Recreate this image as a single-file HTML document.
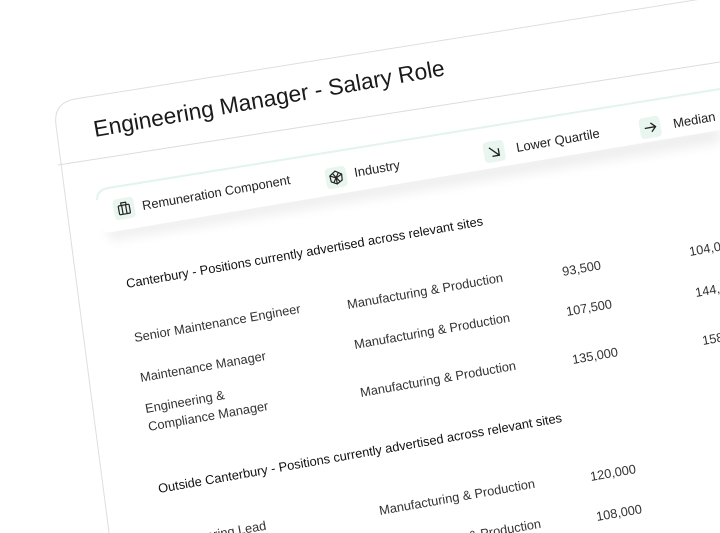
<!DOCTYPE html>
<html><head><meta charset="utf-8"><style>
html,body{margin:0;padding:0;background:#fff;width:720px;height:533px;overflow:hidden}
svg{display:block}
text{font-family:"Liberation Sans",sans-serif}
</style></head><body>
<svg width="720" height="533" viewBox="0 0 720 533" xmlns="http://www.w3.org/2000/svg">
<defs>
<filter id="sh" x="-20%" y="-50%" width="140%" height="250%"><feGaussianBlur stdDeviation="6"/></filter>
</defs>
<path d="M110 540 L56 125 Q53 103 75 99 L720 -4" fill="#fff" stroke="#dedede" stroke-width="1"/>
<line x1="58" y1="165" x2="720" y2="62" stroke="#dcdcdc" stroke-width="1"/>
<path d="M106 228 L720 126 L720 142 L110 240 Z" fill="#000" opacity="0.07" filter="url(#sh)"/>
<path d="M108 188 L720 89 L720 130 L112 232 Q101 233 100 224 L97 200 Q97 190 108 188 Z" fill="#fff"/>
<path d="M97 200 Q97 190 108 188 L720 89" fill="none" stroke="#e3f4ec" stroke-width="2"/>
<text transform="translate(95,137) rotate(-10)" font-size="22.8" fill="#1a1a1a">Engineering Manager - Salary Role</text>
<g transform="translate(112,200) rotate(-10)">
 <rect x="0" y="0" width="21" height="21" rx="4" fill="#e8f6ef"/>
 <g fill="none" stroke="#222" stroke-width="1.2"><rect x="5" y="7" width="11" height="9" rx="1"/><path d="M8 7V4.5h5V7M8.5 7v9M12.5 7v9"/></g>
</g>
<text transform="translate(143,210) rotate(-10)" font-size="12.8" fill="#222">Remuneration Component</text>
<g transform="translate(324,169) rotate(-10)">
 <rect x="0" y="0" width="21" height="21" rx="4" fill="#e8f6ef"/>
 <g fill="none" stroke="#222" stroke-width="1.2"><path d="M10.5 4 L16.5 8 L16 14 L10.5 17 L5 14 L4.5 8 Z M4.5 8 L10.5 11 L16.5 8 M10.5 11 V17 M7.5 6 L13.5 15 M13.5 6 L7.5 15"/></g>
</g>
<text transform="translate(355,177) rotate(-10)" font-size="13" fill="#222">Industry</text>
<g transform="translate(482,143) rotate(-10)">
 <rect x="0" y="0" width="21" height="21" rx="4" fill="#e8f6ef"/>
 <g fill="none" stroke="#222" stroke-width="1.3"><path d="M6 6 L15 15 M8 15 H15 V8"/></g>
</g>
<text transform="translate(517,152) rotate(-10)" font-size="13" fill="#222">Lower Quartile</text>
<g transform="translate(638,119) rotate(-10)">
 <rect x="0" y="0" width="21" height="21" rx="4" fill="#e8f6ef"/>
 <g fill="none" stroke="#222" stroke-width="1.3"><path d="M5 10.5 H16 M11.5 6 L16 10.5 L11.5 15"/></g>
</g>
<text transform="translate(674,128) rotate(-10)" font-size="13" fill="#222">Median</text>
<g font-size="12.8" fill="#222">
<text transform="translate(127,288) rotate(-10)" fill="#111">Canterbury - Positions currently advertised across relevant sites</text>
<text transform="translate(135,342) rotate(-10)" fill="#333">Senior Maintenance Engineer</text>
<text transform="translate(348,309) rotate(-10)" fill="#333">Manufacturing &amp; Production</text>
<text transform="translate(563,276) rotate(-10)" fill="#333">93,500</text>
<text transform="translate(690,256) rotate(-10)" fill="#333">104,000</text>
<text transform="translate(141,382) rotate(-10)" fill="#333">Maintenance Manager</text>
<text transform="translate(355,349) rotate(-10)" fill="#333">Manufacturing &amp; Production</text>
<text transform="translate(567,316) rotate(-10)" fill="#333">107,500</text>
<text transform="translate(696,297) rotate(-10)" fill="#333">144,000</text>
<text transform="translate(146,413) rotate(-10)" fill="#333">Engineering &amp;</text>
<text transform="translate(149,431) rotate(-10)" fill="#333">Compliance Manager</text>
<text transform="translate(361,397) rotate(-10)" fill="#333">Manufacturing &amp; Production</text>
<text transform="translate(573,364) rotate(-10)" fill="#333">135,000</text>
<text transform="translate(703,345) rotate(-10)" fill="#333">158,000</text>
<text transform="translate(159,493) rotate(-10)" fill="#111">Outside Canterbury - Positions currently advertised across relevant sites</text>
<text transform="translate(380,515) rotate(-10)" fill="#333">Manufacturing &amp; Production</text>
<text transform="translate(591,481) rotate(-10)" fill="#333">120,000</text>
<text transform="translate(168,547) rotate(-10)" fill="#333">Engineering Lead</text>
<text transform="translate(386,555) rotate(-10)" fill="#333">Manufacturing &amp; Production</text>
<text transform="translate(597,521) rotate(-10)" fill="#333">108,000</text>
</g>
</svg>
</body></html>
